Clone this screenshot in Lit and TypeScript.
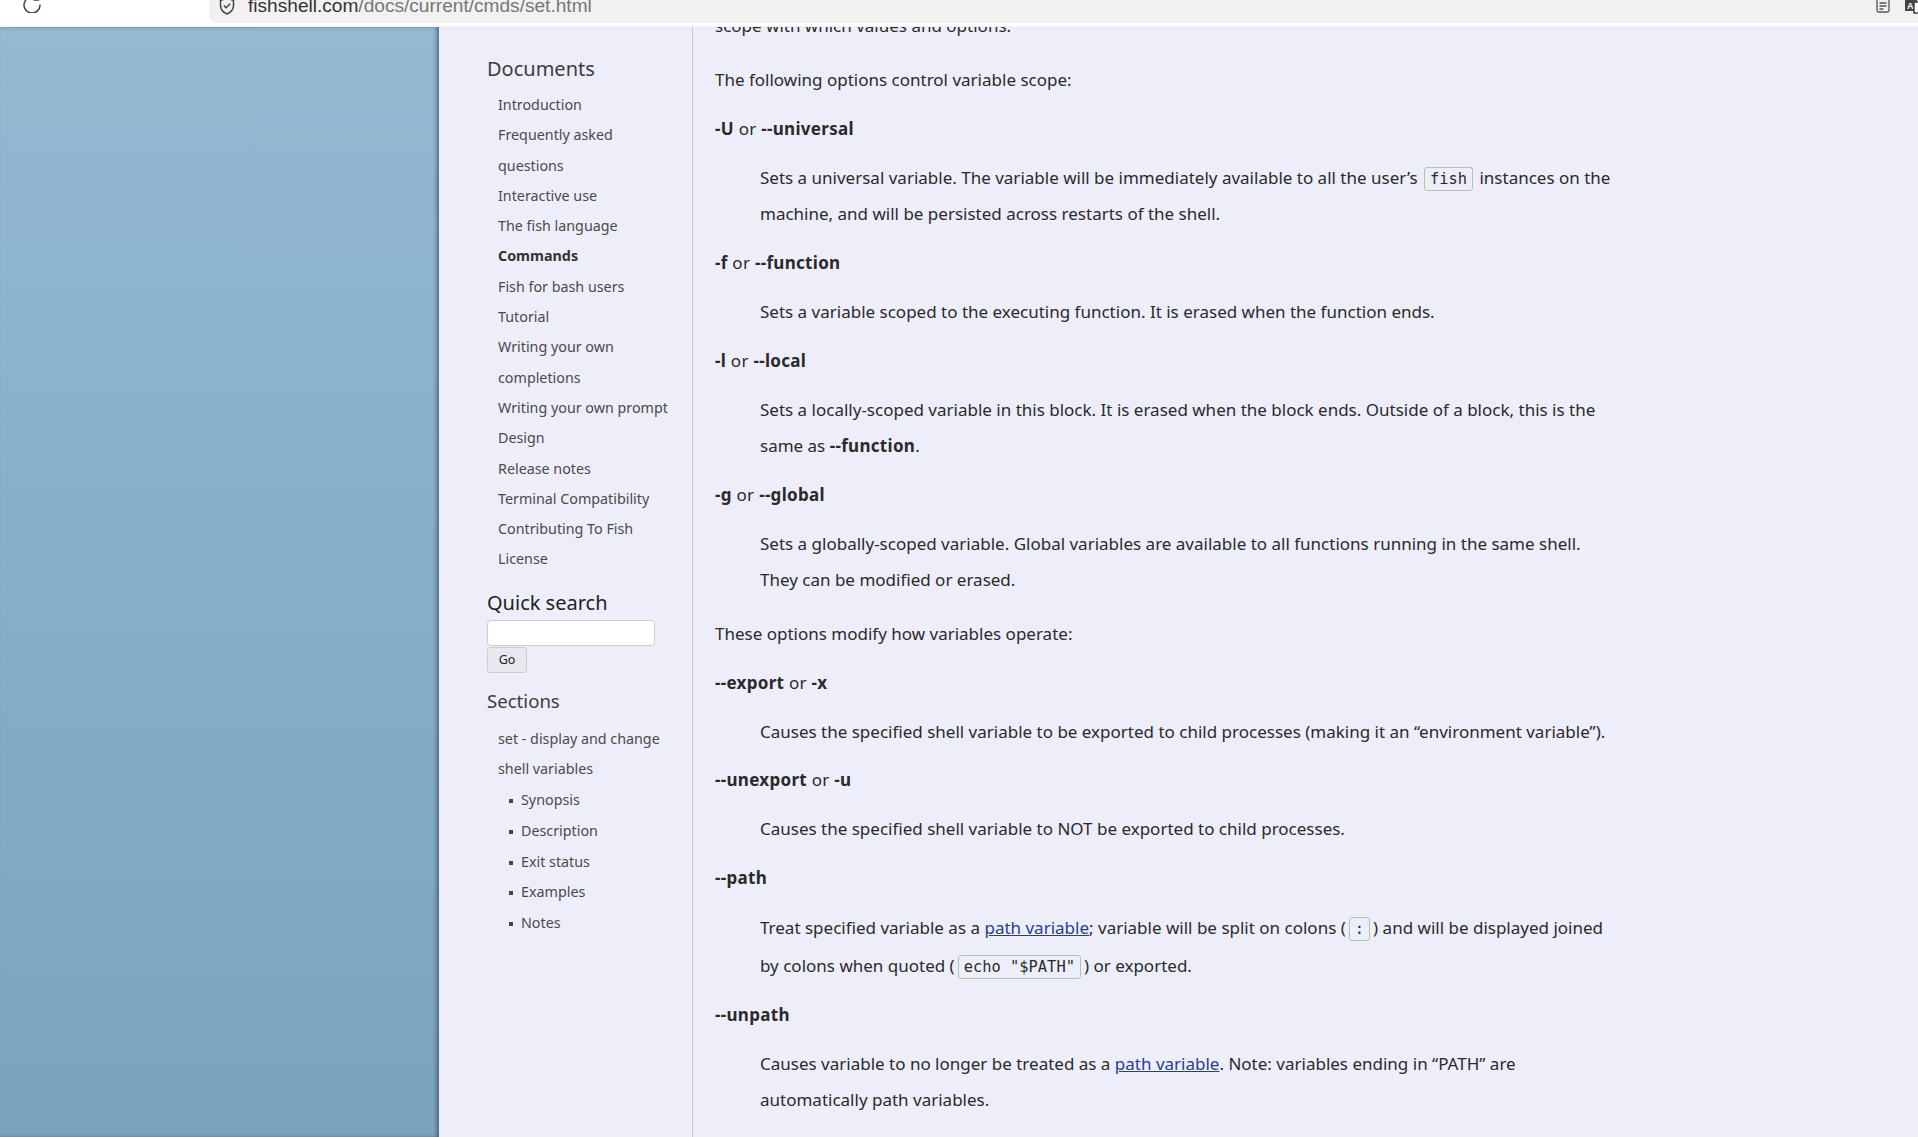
import { html, css, LitElement } from 'lit';
import { customElement } from 'lit/decorators.js';

const documents = [
  'Introduction',
  'Frequently asked questions',
  'Interactive use',
  'The fish language',
  'Commands',
  'Fish for bash users',
  'Tutorial',
  'Writing your own completions',
  'Writing your own prompt',
  'Design',
  'Release notes',
  'Terminal Compatibility',
  'Contributing To Fish',
  'License',
];

const subSections = ['Synopsis', 'Description', 'Exit status', 'Examples', 'Notes'];

@customElement('app-root')
export class AppRoot extends LitElement {
  static styles = css`
    :host {
      display: block;
      height: 1137px;
      overflow: hidden;
      font-family: 'Noto Sans', 'Open Sans', sans-serif;
      color: #2a2a2a;
      background: #fff;
    }

    .topbar {
      height: 27px;
      display: flex;
      background: #fff;
      overflow: hidden;
      box-sizing: border-box;
      border-bottom: 1px solid #f1f1f6;
    }
    .reload {
      width: 209px;
      padding-left: 23px;
      box-sizing: border-box;
      flex: none;
    }
    .reload svg {
      display: block;
      margin-top: -5px;
    }
    .pill {
      flex: 1;
      height: 23px;
      background: #f1f1f1;
      border-bottom-left-radius: 8px;
      display: flex;
      justify-content: space-between;
      overflow: hidden;
    }
    .address {
      display: flex;
      align-items: center;
      gap: 12px;
      height: 22px;
      margin: -5px 0 0 9px;
      font: 19.1px/22px 'Liberation Sans', Arial, sans-serif;
      color: #777;
    }
    .address b {
      font-weight: 400;
      color: #333;
    }
    .tools {
      display: flex;
      gap: 15px;
      margin-top: -4px;
      margin-right: -7px;
    }
    .tools svg {
      display: block;
    }
    .tools text {
      font: 700 9px 'Liberation Sans', sans-serif;
      fill: #fff;
    }

    .page {
      height: 1110px;
      display: flex;
      overflow: hidden;
      background: #eeeefa;
    }
    .backdrop {
      flex: none;
      width: 439px;
      background: linear-gradient(to bottom, #93bad1, #7ba3c0);
      box-shadow: inset -3px 0 4px -1px rgba(40, 60, 80, 0.65);
    }

    .sidebar {
      flex: none;
      width: 254px;
      box-sizing: border-box;
      padding: 28px 16px 0 48px;
      border-right: 1px solid #c6c6d2;
      font-size: 14.3px;
      line-height: 30.3px;
      color: #4a4a4a;
    }
    h3 {
      margin: 0;
      font-size: 20px;
      font-weight: 400;
      line-height: 28px;
      color: #3c3c3c;
    }
    ul {
      list-style: none;
      margin: 0;
      padding: 0;
    }
    .toc {
      margin-top: 7px;
      padding-left: 11px;
    }
    .current {
      font-weight: 700;
      color: #333;
    }
    .sub {
      margin-top: 1px;
      padding-left: 22px;
    }
    .sub li {
      position: relative;
      padding-left: 12px;
      line-height: 30.7px;
    }
    .sub li::before {
      content: '';
      position: absolute;
      left: 0;
      top: 14px;
      width: 4px;
      height: 4px;
      background: #444;
    }
    .search {
      margin-top: 14px;
      line-height: 0;
    }
    .search h3 {
      color: #222;
    }
    .search input {
      display: block;
      width: 168px;
      height: 26px;
      margin: 3px 0 0;
      box-sizing: border-box;
      border: 1px solid #ccc;
      border-radius: 4px;
      background: #fff;
    }
    .search button {
      display: block;
      width: 40px;
      height: 26px;
      margin: 1px 0 0;
      padding: 0;
      border: 1px solid #ccc;
      border-radius: 3px;
      background: #e8e8ee;
      color: #222;
      font: 12.5px 'Noto Sans', sans-serif;
    }
    .sections {
      margin-top: 14px;
    }
    .sections h3 {
      font-size: 18.6px;
    }
    .sections .toc:not(.sub) {
      margin-top: 9px;
    }

    .content {
      flex: 1;
      min-width: 0;
      padding: 0 0 0 22px;
      margin-top: -19px;
      font-size: 17px;
      line-height: 36.3px;
    }
    .content p {
      margin: 0;
      width: 900px;
    }
    .content p + p {
      margin-top: 17.6px;
    }
    dl {
      margin: 12.4px 0 0;
      width: 901px;
    }
    dt {
      font-weight: 700;
      margin-top: 12.6px;
      letter-spacing: 0.3px;
    }
    dt span {
      font-weight: 400;
    }
    dd {
      margin: 12.6px 0 0 45px;
    }
    dd.tall {
      line-height: 37.5px;
    }
    dd b {
      letter-spacing: 0.3px;
    }
    dl + p {
      margin-top: 17.6px !important;
    }
    code {
      font: 15.4px 'DejaVu Sans Mono', monospace;
      padding: 2px 5px;
      margin: 0 2px;
      border: 1px solid #adc8a8;
      border-radius: 3px;
    }
    code.tight {
      margin: 0 3px;
    }
    a {
      color: #1a3f9c;
      text-decoration: underline;
    }
  `;

  render() {
    return html`
      <div class="topbar">
        <div class="reload">
          <svg width="18" height="18" viewBox="0 0 18 18" fill="none" stroke="#444" stroke-width="1.5">
            <path d="M14.6 4.300A8 8 0 1 0 17 9.500" />
            <path d="M15.500 0v5h-5" />
          </svg>
        </div>
        <div class="pill">
          <div class="address">
            <svg width="18" height="20" viewBox="0 0 18 20" fill="none" stroke="#444" stroke-width="1.5">
              <path d="M9 2l6.500 2.500v5c0 4-2.600 6.800-6.500 8.500-3.900-1.700-6.500-4.500-6.500-8.500v-5z" />
              <path d="M5.800 9.500l2.300 2.300 4-4" />
            </svg>
            <span><b>fishshell.com</b>/docs/current/cmds/set.html</span>
          </div>
          <div class="tools">
            <svg width="14" height="17" viewBox="0 0 14 17" fill="none" stroke="#555" stroke-width="1.300">
              <rect x="1" y="1" width="12" height="15" rx="1.500" />
              <path d="M3.500 7h7M3.500 10h7M3.500 13h4" />
            </svg>
            <svg width="20" height="18" viewBox="0 0 20 18">
              <path d="M0 0h12v15H0z" fill="#444" />
              <text x="2" y="13">A</text>
              <path d="M9 6h10v11H9z" fill="#fff" stroke="#444" stroke-width="1.500" />
            </svg>
          </div>
        </div>
      </div>
      <div class="page">
        <div class="backdrop"></div>
        <aside class="sidebar">
          <h3>Documents</h3>
          <ul class="toc">
            ${documents.map((d) => html`<li class=${d === 'Commands' ? 'current' : ''}>${d}</li>`)}
          </ul>
          <div class="search">
            <h3>Quick search</h3>
            <input type="text" />
            <button>Go</button>
          </div>
          <div class="sections">
            <h3>Sections</h3>
            <ul class="toc">
              <li>set - display and change shell variables</li>
            </ul>
            <ul class="sub toc">
              ${subSections.map((s) => html`<li>${s}</li>`)}
            </ul>
          </div>
        </aside>
        <main class="content">
          <p>scope with which values and options.</p>
          <p>The following options control variable scope:</p>
          <dl>
            <dt>-U <span>or</span> --universal</dt>
            <dd>
              Sets a universal variable. The variable will be immediately available to all the user’s
              <code>fish</code> instances on the machine, and will be persisted across restarts of the shell.
            </dd>
            <dt>-f <span>or</span> --function</dt>
            <dd>Sets a variable scoped to the executing function. It is erased when the function ends.</dd>
            <dt>-l <span>or</span> --local</dt>
            <dd>
              Sets a locally-scoped variable in this block. It is erased when the block ends. Outside of a block,
              this is the same as <b>--function</b>.
            </dd>
            <dt>-g <span>or</span> --global</dt>
            <dd>
              Sets a globally-scoped variable. Global variables are available to all functions running in the same
              shell. They can be modified or erased.
            </dd>
          </dl>
          <p>These options modify how variables operate:</p>
          <dl>
            <dt>--export <span>or</span> -x</dt>
            <dd>
              Causes the specified shell variable to be exported to child processes (making it an “environment
              variable”).
            </dd>
            <dt>--unexport <span>or</span> -u</dt>
            <dd>Causes the specified shell variable to NOT be exported to child processes.</dd>
            <dt>--path</dt>
            <dd class="tall">
              Treat specified variable as a <a>path variable</a>; variable will be split on colons
              (<code class="tight">:</code>) and will be displayed joined by colons when quoted
              (<code class="tight">echo "$PATH"</code>) or exported.
            </dd>
            <dt>--unpath</dt>
            <dd>
              Causes variable to no longer be treated as a <a>path variable</a>. Note: variables ending in “PATH”
              are automatically path variables.
            </dd>
          </dl>
        </main>
      </div>
    `;
  }
}
